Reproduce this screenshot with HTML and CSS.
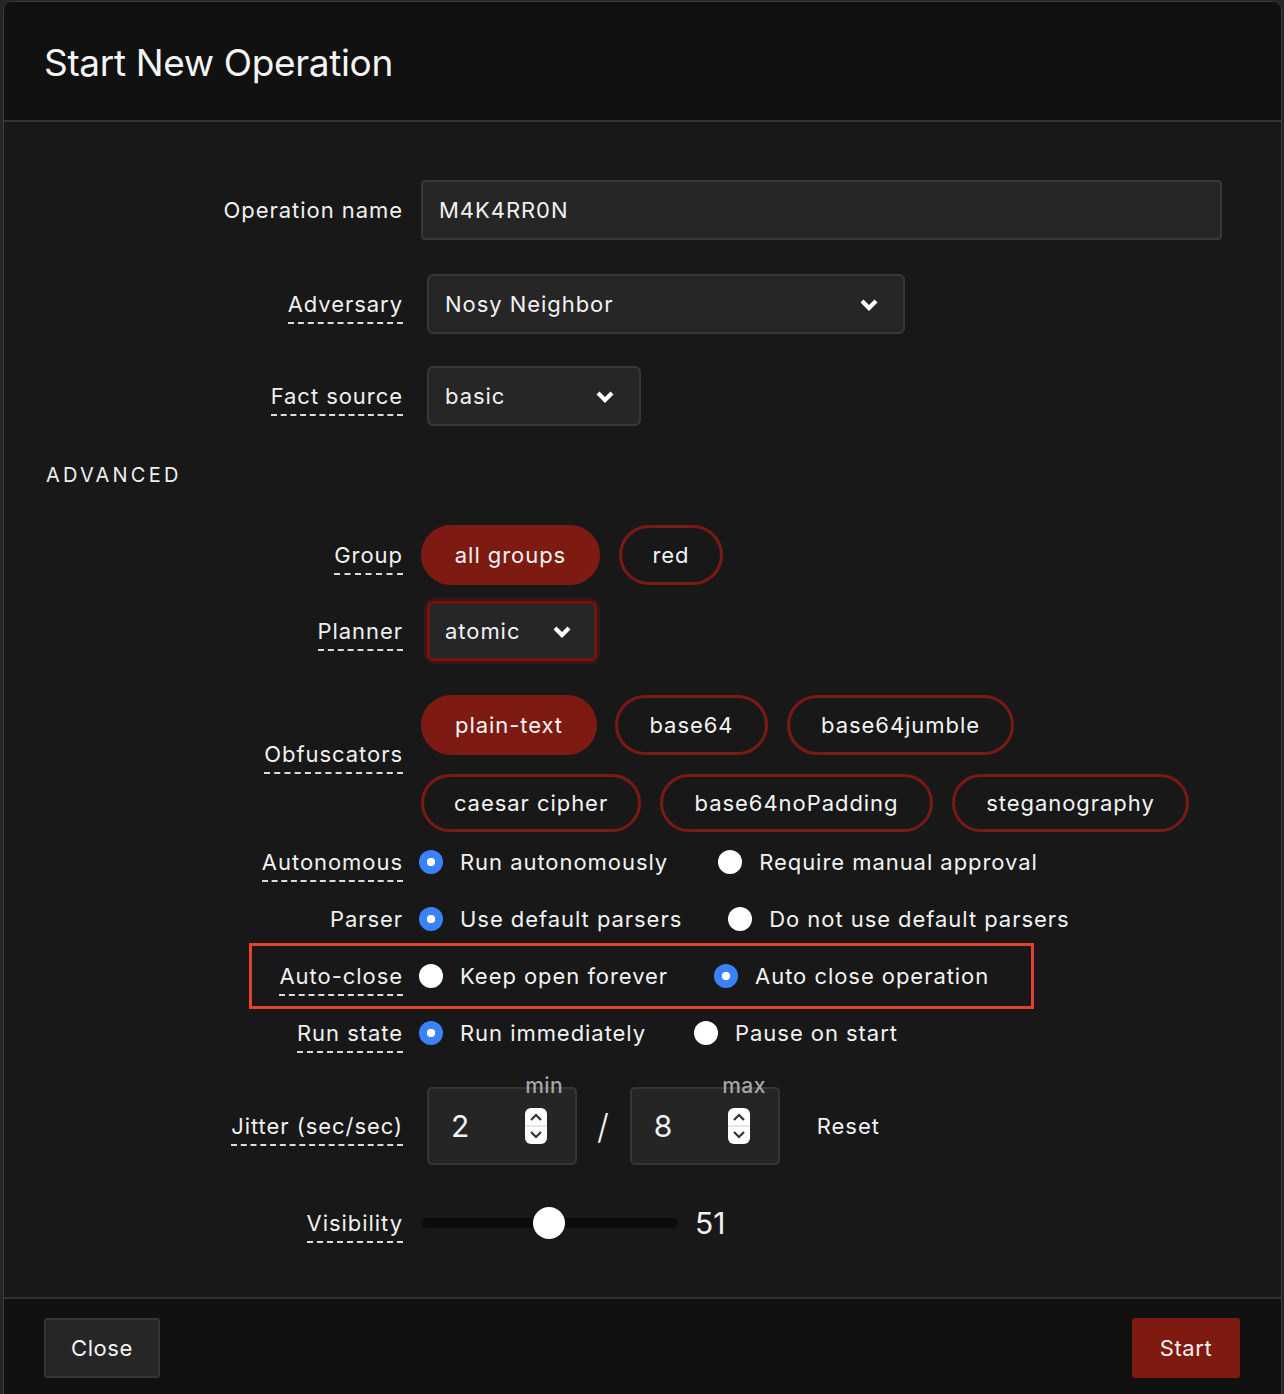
FILE: index.html
```html
<!DOCTYPE html>
<html>
<head>
<meta charset="utf-8">
<link rel="stylesheet" href="styles.css">
</head>
<body>
<div class="modal">
  <header class="modal-head">
    <h1 class="title">Start New Operation</h1>
  </header>
  <section class="modal-body">
    <div class="row row-name">
      <div class="label"><span>Operation name</span></div>
      <div class="control"><div class="input wide">M4K4RR0N</div></div>
    </div>
    <div class="row row-adv">
      <div class="label"><span class="tip">Adversary</span></div>
      <div class="control"><div class="select sel-adv"><span>Nosy Neighbor</span><svg class="chev" viewBox="0 0 20 14"><path d="M3 4 L10 11 L17 4" /></svg></div></div>
    </div>
    <div class="row row-fact">
      <div class="label"><span class="tip">Fact source</span></div>
      <div class="control"><div class="select sel-fact"><span>basic</span><svg class="chev" viewBox="0 0 20 14"><path d="M3 4 L10 11 L17 4" /></svg></div></div>
    </div>
    <div class="advanced">ADVANCED</div>
    <div class="row row-group">
      <div class="label"><span class="tip">Group</span></div>
      <div class="control pills">
        <span class="pill on">all groups</span>
        <span class="pill">red</span>
      </div>
    </div>
    <div class="row row-planner">
      <div class="label"><span class="tip">Planner</span></div>
      <div class="control"><div class="select sel-plan"><span>atomic</span><svg class="chev" viewBox="0 0 20 14"><path d="M3 4 L10 11 L17 4" /></svg></div></div>
    </div>
    <div class="row row-obf">
      <div class="label"><span class="tip">Obfuscators</span></div>
      <div class="control obf">
        <div class="pills">
          <span class="pill on p-plain">plain-text</span>
          <span class="pill p-b64">base64</span>
          <span class="pill p-jum">base64jumble</span>
        </div>
        <div class="pills">
          <span class="pill p-cae">caesar cipher</span>
          <span class="pill p-nop">base64noPadding</span>
          <span class="pill p-steg">steganography</span>
        </div>
      </div>
    </div>
    <div class="row radio-row first-radio">
      <div class="label"><span class="tip">Autonomous</span></div>
      <div class="control radios">
        <span class="radio on"></span><span class="rtext r1">Run autonomously</span>
        <span class="radio"></span><span class="rtext">Require manual approval</span>
      </div>
    </div>
    <div class="row radio-row">
      <div class="label"><span>Parser</span></div>
      <div class="control radios">
        <span class="radio on"></span><span class="rtext r2">Use default parsers</span>
        <span class="radio"></span><span class="rtext r2b">Do not use default parsers</span>
      </div>
    </div>
    <div class="row radio-row highlight-wrap">
      <div class="highlight"></div>
      <div class="label"><span class="tip">Auto-close</span></div>
      <div class="control radios">
        <span class="radio"></span><span class="rtext r3">Keep open forever</span>
        <span class="radio on"></span><span class="rtext">Auto close operation</span>
      </div>
    </div>
    <div class="row radio-row">
      <div class="label"><span class="tip">Run state</span></div>
      <div class="control radios">
        <span class="radio on"></span><span class="rtext r4">Run immediately</span>
        <span class="radio"></span><span class="rtext">Pause on start</span>
      </div>
    </div>
    <div class="row row-jitter">
      <div class="label"><span class="tip">Jitter (sec/sec)</span></div>
      <div class="control jitter">
        <div class="num">
          <span class="cap">min</span>
          <span class="val">2</span>
          <svg class="spin" viewBox="0 0 22 36"><rect x="0" y="0" width="22" height="36" rx="6" fill="#fff"/><line x1="0" y1="18" x2="22" y2="18" stroke="#ccc" stroke-width="1"/><path d="M6 12 L11 7 L16 12" /><path d="M6 24 L11 29 L16 24" /></svg>
        </div>
        <span class="slash">/</span>
        <div class="num">
          <span class="cap">max</span>
          <span class="val">8</span>
          <svg class="spin" viewBox="0 0 22 36"><rect x="0" y="0" width="22" height="36" rx="6" fill="#fff"/><line x1="0" y1="18" x2="22" y2="18" stroke="#ccc" stroke-width="1"/><path d="M6 12 L11 7 L16 12" /><path d="M6 24 L11 29 L16 24" /></svg>
        </div>
        <span class="reset">Reset</span>
      </div>
    </div>
    <div class="row row-vis">
      <div class="label"><span class="tip">Visibility</span></div>
      <div class="control vis">
        <div class="track"><span class="thumb"></span></div>
        <span class="vis-val">51</span>
      </div>
    </div>
  </section>
  <footer class="modal-foot">
    <button class="btn btn-close">Close</button>
    <button class="btn btn-start">Start</button>
  </footer>
</div>
</body>
</html>
```
FILE: styles.css
```css
* { box-sizing: border-box; }
html, body { margin: 0; padding: 0; }
body {
  background: #262626;
  font-family: "Inter", "Noto Sans", sans-serif;
  color: #f2f2f2;
  width: 1284px;
  height: 1394px;
  overflow: hidden;
}
.modal {
  margin: 1px 2px 0 3px;
  height: 1393px;
  border: 1px solid #3a3a3a;
  border-bottom: none;
  border-radius: 9px 9px 0 0;
  background: #181818;
  overflow: hidden;
  display: flex;
  flex-direction: column;
}
.modal-head {
  height: 120px;
  background: #111;
  border-bottom: 2px solid #333;
  display: flex;
  align-items: center;
  padding-left: 41px;
}
.title {
  margin: 0;
  font-weight: 400;
  font-size: 37px;
  letter-spacing: -0.35px;
  color: #f4f4f4;
  position: relative;
  top: 1px;
  left: -1px;
}
.modal-body {
  height: 1175px;
  padding: 58px 0 0 41px;
}
.row {
  display: flex;
  align-items: center;
}
.label {
  width: 358px;
  flex: none;
  text-align: right;
  font-size: 22px;
  letter-spacing: 0.95px;
  color: #f0f0f0;
}
.label span { display: inline-block; line-height: 24px; }
.label .tip {
  border-bottom: 2px dashed #dcdcdc;
  padding-bottom: 6px;
  margin-bottom: -8px;
}
.control {
  margin-left: 18px;
  display: flex;
  align-items: center;
  font-size: 22px;
  letter-spacing: 0.95px;
}
.input {
  height: 60px;
  border: 2px solid #383838;
  border-radius: 4px;
  background: #262626;
  display: flex;
  align-items: center;
  padding-left: 16px;
  color: #f2f2f2;
}
.input.wide { width: 801px; }

.select {
  height: 60px;
  margin-left: 6px;
  border: 2px solid #383838;
  border-radius: 6px;
  background: #262626;
  display: flex;
  align-items: center;
  justify-content: space-between;
  padding: 0 24px 0 16px;
}
.chev { width: 20px; height: 14px; }
.chev path { fill: none; stroke: #fff; stroke-width: 4.2; stroke-linecap: butt; stroke-linejoin: miter; }
.sel-adv { width: 478px; }
.sel-fact { width: 214px; }
.sel-plan {
  width: 170px;
  border: 3px solid #6e1710;
  box-shadow: 0 0 0 3px #3a1512;
  padding-left: 15px;
  padding-right: 22px;
}
.row-adv { margin-top: 34px; }
.row-fact { margin-top: 32px; }

.advanced {
  margin-top: 34px;
  margin-left: 1px;
  font-size: 20px;
  letter-spacing: 3.2px;
  color: #eee;
  height: 30px;
  line-height: 30px;
}

.pills { display: flex; gap: 19px; }
.pill {
  height: 60px;
  border: 3px solid #7a1a12;
  border-radius: 30px;
  display: inline-flex;
  align-items: center;
  justify-content: center;
  padding: 0 20px;
  font-size: 22px;
  color: #f4f4f4;
}
.pill.on { background: #7d1a11; border-color: #7d1a11; }
.row-group { margin-top: 35px; }
.row-group .pill:first-child { width: 179px; }
.row-group .pill:nth-child(2) { width: 104px; }
.row-planner { margin-top: 16px; }

.row-obf { margin-top: 34px; }
.obf { flex-direction: column; align-items: flex-start; gap: 19px; }
.obf .pills:nth-child(2) .pill { height: 58px; }
.p-plain { width: 176px; }
.p-b64 { width: 153px; margin-left: -1px; }
.p-jum { width: 227px; }
.p-cae { width: 220px; }
.p-nop { width: 273px; }
.p-steg { width: 237px; }
.row-obf .label { padding-bottom: 20px; }

.radio-row { height: 57px; }
.first-radio { margin-top: 1px; }
.radios { margin-left: 16px; }
.radio {
  width: 24px;
  height: 24px;
  border-radius: 50%;
  background: #fff;
  flex: none;
}
.radio.on {
  background: radial-gradient(circle, #fff 0 4px, #3b82f6 4.5px);
}
.rtext { margin-left: 17px; margin-right: 50px; }
.r1 { margin-right: 50px; }
.r2 { margin-right: 46px; }
.r2b { margin-left: 17px; }
.r3 { margin-right: 46px; }
.r4 { margin-right: 48px; }
.rtext:last-child { margin-right: 0; }

.highlight-wrap { position: relative; }
.highlight {
  position: absolute;
  left: 204px;
  top: -4px;
  width: 785px;
  height: 66px;
  border: 3px solid #e3412b;
}

.row-jitter { margin-top: 26px; }
.jitter { margin-left: 24px; }
.num {
  position: relative;
  width: 150px;
  height: 78px;
  border: 2px solid #363636;
  border-radius: 5px;
  background: #252525;
  display: flex;
  align-items: center;
  padding-left: 22px;
  font-size: 30px;
}
.num .val { flex: 1; }
.num .cap {
  position: absolute;
  right: 12px;
  top: -16px;
  font-size: 21px;
  letter-spacing: 0.4px;
  color: #a6a6a6;
  font-weight: 500;
}
.spin { width: 22px; height: 36px; margin-right: 28px; }
.spin path { fill: none; stroke: #333; stroke-width: 2.2; }
.slash { font-size: 34px; margin: 0 20px 0 20px; font-weight: 300; }
.reset { margin-left: 37px; font-size: 22px; }

.row-vis { margin-top: 40px; }
.vis { margin-left: 18px; }
.track {
  position: relative;
  width: 257px;
  height: 10px;
  border-radius: 5px;
  background: #0c0c0c;
}
.thumb {
  position: absolute;
  left: 112px;
  top: -11px;
  width: 32px;
  height: 32px;
  border-radius: 50%;
  background: #fff;
}
.vis-val { margin-left: 17px; font-size: 30px; letter-spacing: 0; }

.modal-foot {
  flex: 1;
  background: #111;
  border-top: 2px solid #333;
  display: flex;
  justify-content: space-between;
  align-items: flex-start;
  padding: 19px 41px 0 40px;
}
.btn {
  height: 60px;
  border-radius: 3px;
  font-family: "Inter", "Noto Sans", sans-serif;
  font-size: 22px;
  letter-spacing: 0.6px;
  color: #f2f2f2;
  cursor: pointer;
}
.btn-close {
  width: 116px;
  background: #262626;
  border: 2px solid #353535;
}
.btn-start {
  width: 108px;
  background: #7f1a11;
  border: none;
}
```
